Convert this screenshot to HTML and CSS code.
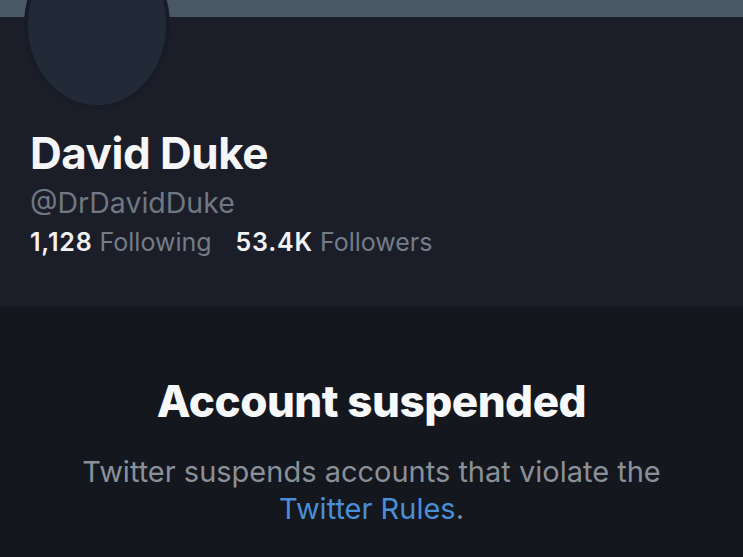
FILE: index.html
```html
<!DOCTYPE html>
<html lang="en">
<head>
<meta charset="utf-8">
<title>David Duke</title>
<link rel="stylesheet" href="styles.css">
</head>
<body>
<div class="banner"></div>
<section class="profile">
  <div class="avatar"></div>
  <h1 class="name">David Duke</h1>
  <div class="handle">@DrDavidDuke</div>
  <div class="stats">
    <span class="stat"><b class="num">1,128</b> Following</span>
    <span class="stat"><b class="num">53.4K</b> Followers</span>
  </div>
</section>
<section class="suspended">
  <h2 class="title">Account suspended</h2>
  <p class="desc">Twitter suspends accounts that violate the <a class="link" href="#">Twitter Rules</a>.</p>
</section>
</body>
</html>
```
FILE: styles.css
```css
html, body {
  margin: 0;
  padding: 0;
  height: 100%;
}
body {
  background: #14171e;
  font-family: Inter, "Liberation Sans", Arial, sans-serif;
  color: #f4f5f6;
  overflow: hidden;
}
.banner {
  height: 17px;
  background: #4a5765;
}
.profile {
  display: flex;
  flex-direction: column;
  align-items: flex-start;
  background: #1b1e29;
  height: 290px;
  padding: 0 30px;
  box-sizing: border-box;
}
.avatar {
  flex: none;
  width: 138px;
  height: 160px;
  margin-top: -76px;
  margin-left: -6px;
  border-radius: 50%;
  background: #222a38;
  border: 4px solid #181c26;
}
.name {
  margin: 18px 0 0;
  font-size: 44px;
  line-height: 52px;
  font-weight: 700;
  letter-spacing: -0.5px;
  color: #f5f6f7;
}
.handle {
  margin-top: 6px;
  font-size: 28.5px;
  line-height: 36px;
  color: #6e7782;
}
.stats {
  margin-top: 5px;
  display: flex;
  gap: 24px;
  font-size: 25px;
  line-height: 32px;
  color: #737c87;
}
.num {
  font-weight: 600;
  letter-spacing: 0.8px;
  color: #f2f3f5;
}
.suspended {
  text-align: center;
  padding-top: 68px;
}
.title {
  margin: 0;
  font-size: 44px;
  line-height: 52px;
  font-weight: 800;
  letter-spacing: -0.5px;
  color: #f7f8f9;
}
.desc {
  margin: 26px auto 0;
  font-size: 29px;
  line-height: 37px;
  color: #8a9099;
  width: 640px;
}
.link {
  color: #4a8fd6;
  text-decoration: none;
}
```
